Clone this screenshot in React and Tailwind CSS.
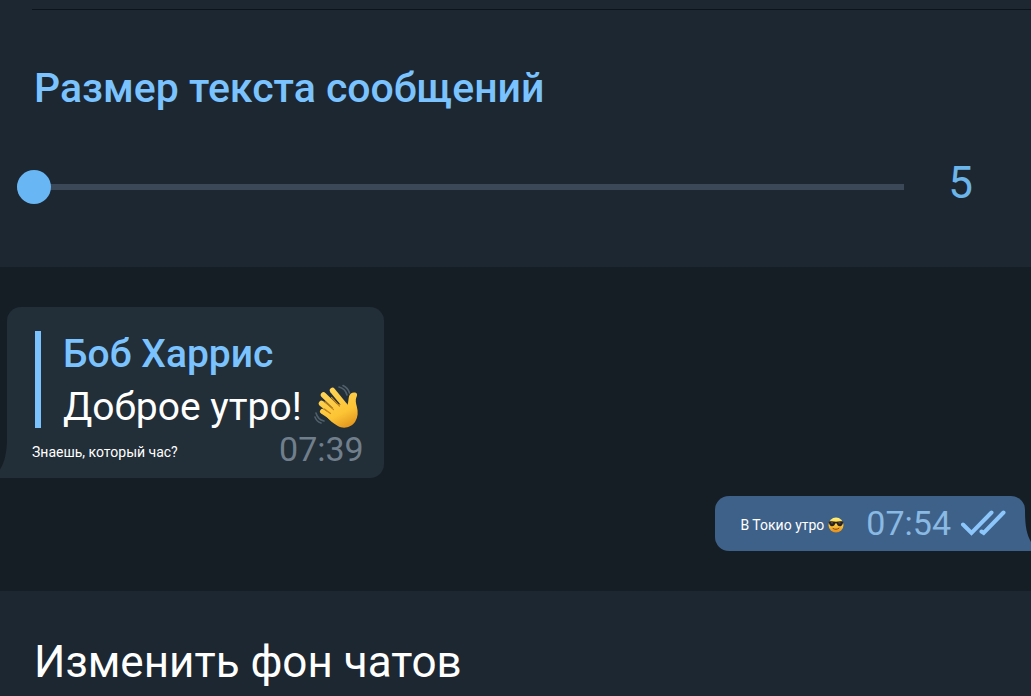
import { useState } from "react";

function WaveEmoji() {
  return (
    <svg viewBox="0 0 46 46" className="-my-0.5 size-[46px] shrink-0" role="img" aria-label="Машущая рука">
      <defs>
        <linearGradient id="skin" gradientUnits="userSpaceOnUse" x1="10" y1="4" x2="32" y2="46">
          <stop offset="0" stopColor="#ffd65a" />
          <stop offset="0.65" stopColor="#fcc435" />
          <stop offset="1" stopColor="#e0921c" />
        </linearGradient>
      </defs>
      <g fill="none" stroke="#50606b" strokeWidth="1.6" strokeLinecap="round">
        <path d="M25 3c4 1 7 4 8 8" />
        <path d="M29 1.500c3 1.500 5.500 4 6.500 7.500" />
        <path d="M2 29c1 4 4 7 8 8" />
        <path d="M1 33c1 3 3 5 6 6" />
      </g>
      <g stroke="url(#skin)" strokeLinecap="round" fill="none">
        <path d="M8.500 27.500l15 10" strokeWidth="5" />
        <path d="M7.500 19.500l16 13" strokeWidth="5.500" />
        <path d="M9.500 11L27 28" strokeWidth="5.500" />
        <path d="M18.500 6.500L32 23" strokeWidth="5.500" />
      </g>
      <path
        d="M33.500 21c1-3 .8-6 1.500-8.500C35.800 9.300 38.500 8 41 8.500c2.700.6 2.300 3 1.500 4.500-1.300 2.500-.6 6 .3 9.500 1.500 5.500 1.200 10.500-1.500 15-4 6-11.500 8-17.500 4.500C19 39 15 36 12 32l10-12 8 1z"
        fill="url(#skin)"
      />
      <g fill="none" stroke="#c98516" strokeWidth="1.200" strokeLinecap="round">
        <path d="M10.500 25l6 4.500" />
        <path d="M11 17.800l8.500 7.800" />
        <path d="M17.500 13.500l8 8.500" />
      </g>
    </svg>
  );
}

function CoolEmoji() {
  return (
    <svg viewBox="0 0 16 16" className="size-4" role="img" aria-label="В тёмных очках">
      <defs>
        <linearGradient id="face" x1="0" y1="0" x2="0" y2="1">
          <stop offset="0" stopColor="#fff27a" />
          <stop offset="0.5" stopColor="#fbc93b" />
          <stop offset="1" stopColor="#e38a1c" />
        </linearGradient>
      </defs>
      <circle cx="8" cy="8" r="7.500" fill="url(#face)" />
      <path
        d="M.8 4.500c2.500-.6 4.800-.4 7.200.3 2.400-.7 4.700-.9 7.200-.3v1.300c-.5.300-.6 3.200-2.700 3.500-2.300.3-3.200-1-3.600-2.800H7.100C6.700 8.300 5.800 9.600 3.500 9.300 1.400 9 1.300 6.100.8 5.800z"
        fill="#2b211d"
      />
      <path d="M3 5.800l2 .2M10.500 5.800l2 .2" stroke="#7b7370" strokeWidth=".8" />
      <path d="M5 11.500c2 1.200 4 1.100 6-.3" fill="none" stroke="#8a4513" strokeWidth="1" strokeLinecap="round" />
    </svg>
  );
}

function ReadChecks() {
  return (
    <svg viewBox="0 0 46 28" className="h-7 w-[46px]" fill="none" stroke="#8cc6fb" strokeWidth="4" strokeLinecap="round" role="img" aria-label="Прочитано">
      <path d="M3 14.500L11.500 23 31.500 2.500" />
      <path d="M21.500 21.500l2.200 1.500L43.500 2.500" />
    </svg>
  );
}

function IncomingMessage() {
  return (
    <article className="relative w-fit rounded-[14px] rounded-bl-none bg-[#222e38] pt-6 pr-5 pb-2 pl-[25px]">
      <svg viewBox="0 0 8 40" className="absolute right-full bottom-0 h-10 w-2" fill="#222e38" aria-hidden="true">
        <path d="M8 0v40H0V33C5 26 8 16 8 0z" />
      </svg>
      <blockquote className="ml-[3px] flex flex-col gap-2 border-l-6 border-[#7ac3ff] pr-1 pl-[22px] text-[39px]">
        <cite className="block leading-[47px] font-medium text-[#7ac3ff] not-italic">Боб Харрис</cite>
        <div className="flex items-center gap-3 leading-[42px] text-white">
          <span>Доброе утро!</span>
          <WaveEmoji />
        </div>
      </blockquote>
      <div className="flex items-center justify-between">
        <p className="pt-1.5 text-sm text-white">Знаешь, который час?</p>
        <time className="text-[34px] leading-[42px] text-[#707f8b]">07:39</time>
      </div>
    </article>
  );
}

function OutgoingMessage() {
  return (
    <article className="relative ml-auto flex w-fit items-center rounded-[14px] rounded-br-none bg-[#3e6189] py-1.5 pr-[19px] pl-[25px]">
      <p className="flex items-center gap-1 pt-0.5 text-sm text-white">
        В Токио утро <CoolEmoji />
      </p>
      <time className="ml-[22px] text-[34px] leading-[43px] text-[#8ab9e3]">07:54</time>
      <span className="ml-[9px]">
        <ReadChecks />
      </span>
      <svg viewBox="0 0 6 40" className="absolute bottom-0 left-full h-10 w-1.5" fill="#3e6189" aria-hidden="true">
        <path d="M0 0v40h6V31C2 24 0 16 0 0z" />
      </svg>
    </article>
  );
}

export default function App() {
  const [size, setSize] = useState(5);

  return (
    <main className="min-h-screen overflow-x-hidden bg-[#1d2731] font-[Roboto,sans-serif]">
      <section className="pt-[9px] pb-[60px]">
        <hr className="ml-8 border-t border-[#0c131a]" />
        <h2 className="mt-[54px] px-[34px] text-[41px] leading-12 font-medium text-[#7ac3ff]">
          <label htmlFor="text-size">Размер текста сообщений</label>
        </h2>
        <div className="mt-[55px] flex items-center pr-[58px] pl-[17px]">
          <input
            id="text-size"
            type="range"
            min="5"
            max="30"
            value={size}
            onChange={(e) => setSize(Number(e.target.value))}
            className="h-[34px] min-w-0 flex-1 cursor-pointer appearance-none bg-transparent [&::-webkit-slider-runnable-track]:h-1.5 [&::-webkit-slider-runnable-track]:bg-[#3b4858] [&::-webkit-slider-thumb]:-mt-3.5 [&::-webkit-slider-thumb]:size-[34px] [&::-webkit-slider-thumb]:appearance-none [&::-webkit-slider-thumb]:rounded-full [&::-webkit-slider-thumb]:bg-[#68b6f3]"
          />
          <output htmlFor="text-size" className="-mt-2 w-[69px] text-right text-[44px] leading-[48px] text-[#6cb5ea]">
            {size}
          </output>
        </div>
      </section>

      <section className="flex flex-col gap-[18px] bg-[#151e25] pt-10 pr-1.5 pb-10 pl-[7px]">
        <IncomingMessage />
        <OutgoingMessage />
      </section>

      <button type="button" className="block w-full cursor-pointer px-[34px] pt-[45px] pb-1 text-left text-[44px] leading-[52px] text-white">
        Изменить фон чатов
      </button>
    </main>
  );
}
